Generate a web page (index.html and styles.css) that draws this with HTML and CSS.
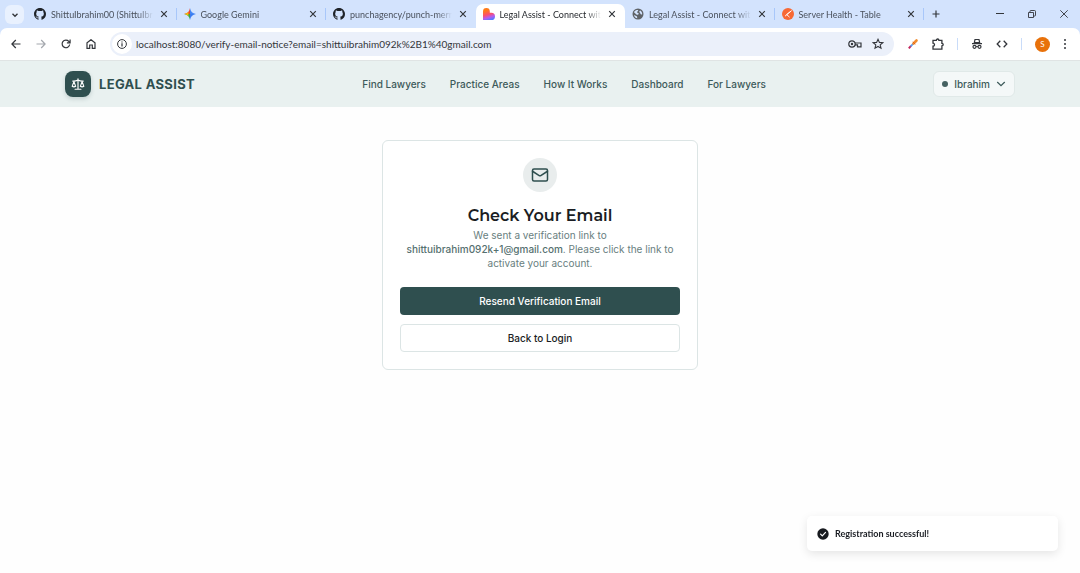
FILE: index.html
```html
<!DOCTYPE html>
<html lang="en">
<head>
    <meta charset="UTF-8">
    <meta name="viewport" content="width=device-width, initial-scale=1.0">
    <title>Legal Assist - Connect with</title>
    <link rel="stylesheet" href="styles.css">
</head>
<body>
    <!-- shared icons -->
    <svg class="sprite" aria-hidden="true">
        <symbol id="close" viewBox="0 0 8 8">
            <path d="M1.2 1.2l5.6 5.6M6.8 1.2L1.2 6.8" fill="none" stroke="currentColor" stroke-width="1.2"/>
        </symbol>
        <symbol id="github" viewBox="0 0 16 16">
            <path fill="#1f2328" d="M8 0C3.58 0 0 3.58 0 8c0 3.54 2.29 6.53 5.47 7.59.4.07.55-.17.55-.38 0-.19-.01-.82-.01-1.49-2.01.37-2.53-.49-2.69-.94-.09-.23-.48-.94-.82-1.13-.28-.15-.68-.52-.01-.53.63-.01 1.08.58 1.23.82.72 1.21 1.87.87 2.33.66.07-.52.28-.87.51-1.07-1.78-.2-3.64-.89-3.64-3.95 0-.87.31-1.59.82-2.15-.08-.2-.36-1.02.08-2.12 0 0 .67-.21 2.2.82.64-.18 1.32-.27 2-.27s1.36.09 2 .27c1.53-1.04 2.2-.82 2.2-.82.44 1.1.16 1.92.08 2.12.51.56.82 1.27.82 2.15 0 3.07-1.87 3.75-3.65 3.95.29.25.54.73.54 1.48 0 1.07-.01 1.93-.01 2.2 0 .21.15.46.55.38A8.01 8.01 0 0 0 16 8c0-4.42-3.58-8-8-8z"/>
        </symbol>
    </svg>

    <div class="browser">
        <div class="tab-strip">
            <button class="tab-search" aria-label="Search tabs">
                <svg width="8" height="8" viewBox="0 0 8 8"><path d="M1.5 2.8L4 5.2l2.5-2.4" fill="none" stroke="currentColor" stroke-width="1.4"/></svg>
            </button>
            <div class="tabs">
                <div class="tab">
                    <svg class="favicon"><use href="#github"/></svg>
                    <span class="tab-title">ShittuIbrahim00 (ShittuIbra</span>
                    <button class="tab-close" aria-label="Close tab"><svg><use href="#close"/></svg></button>
                </div>
                <div class="tab">
                    <svg class="favicon" viewBox="0 0 12 12">
                        <path d="M6 0C6.500 3.500 8.500 5.500 12 6H6z" fill="#4285f4"/>
                        <path d="M6 0C5.500 3.500 3.500 5.500 0 6h6z" fill="#ea4335"/>
                        <path d="M0 6c3.500.5 5.500 2.500 6 6V6z" fill="#34a853"/>
                        <path d="M12 6C8.500 6.500 6.500 8.500 6 12V6z" fill="#3b7cf0"/>
                        <path d="M0 6c2-.3 3.400-1 4.400-2.200v4.400C3.400 7 2 6.300 0 6z" fill="#fbbc04"/>
                    </svg>
                    <span class="tab-title">Google Gemini</span>
                    <button class="tab-close" aria-label="Close tab"><svg><use href="#close"/></svg></button>
                </div>
                <div class="tab before-active">
                    <svg class="favicon"><use href="#github"/></svg>
                    <span class="tab-title">punchagency/punch-mern</span>
                    <button class="tab-close" aria-label="Close tab"><svg><use href="#close"/></svg></button>
                </div>
                <div class="tab active">
                    <svg class="favicon" viewBox="0 0 12 12">
                        <defs>
                            <linearGradient id="heart" x1="0.2" y1="0" x2="0.5" y2="1">
                                <stop offset="0.2" stop-color="#ff7a18"/>
                                <stop offset="0.55" stop-color="#fb4f6b"/>
                                <stop offset="0.8" stop-color="#b45cf0"/>
                                <stop offset="1" stop-color="#5b7bff"/>
                            </linearGradient>
                        </defs>
                        <path d="M0 12V3.500a3.400 3.400 0 0 1 6.800 0v1.300h1.600a3.600 3.600 0 0 1 0 7.200z" fill="url(#heart)"/>
                    </svg>
                    <span class="tab-title">Legal Assist - Connect with</span>
                    <button class="tab-close" aria-label="Close tab"><svg><use href="#close"/></svg></button>
                </div>
                <div class="tab">
                    <svg class="favicon" viewBox="0 0 12 12">
                        <circle cx="6" cy="6" r="5.500" fill="#5f6368"/>
                        <path d="M2 4.200C3 2.400 4.500 2 6 2.100c.6.900-.2 1.400-1 1.600-.3.800.4 1 1.300 1.300.8.500.3 1.600-.7 1.700-.9 0-1.500-.7-2.300-1.300zM8.200 2.600c1.300.8 2 2 2 3.600-.8.500-1.700.2-1.900-.7-.1-.8-1-.9-1-1.700 0-.6.500-.9.900-1.200zM2 7.200c1.200 0 2 .7 2.700 1.100.6.400.3 1.200.6 1.900C3.600 10 2.300 8.800 2 7.200z" fill="#d3e3fd"/>
                    </svg>
                    <span class="tab-title">Legal Assist - Connect with</span>
                    <button class="tab-close" aria-label="Close tab"><svg><use href="#close"/></svg></button>
                </div>
                <div class="tab">
                    <svg class="favicon" viewBox="0 0 12 12">
                        <circle cx="6" cy="6" r="6" fill="#f76935"/>
                        <path d="M9.600 2.600L4.600 6.500l3 2.700M9.200 3L3 8.200" fill="none" stroke="#fff" stroke-width="0.9"/>
                    </svg>
                    <span class="tab-title">Server Health - Table</span>
                    <button class="tab-close" aria-label="Close tab"><svg><use href="#close"/></svg></button>
                </div>
            </div>
            <div class="window-side">
                <button class="new-tab" aria-label="New tab">
                    <svg width="8" height="8" viewBox="0 0 8 8"><path d="M4 .5v7M.5 4h7" stroke="currentColor" stroke-width="1.200"/></svg>
                </button>
                <div class="window-controls">
                    <button aria-label="Minimize"><svg width="8" height="8" viewBox="0 0 8 8"><path d="M0 3.500h8" stroke="currentColor"/></svg></button>
                    <button aria-label="Restore"><svg width="8" height="8" viewBox="0 0 8 8"><path d="M.5 2.500h5v5h-5zM2 2.500V1.200Q2 .5 2.700.5H6.500Q7.500.5 7.500 1.500V5.300Q7.500 6 6.800 6H5.500" fill="none" stroke="currentColor" stroke-width="0.9"/></svg></button>
                    <button aria-label="Close"><svg width="8" height="8" viewBox="0 0 8 8"><path d="M.3.3l7.400 7.400M7.700.3L.3 7.700" stroke="currentColor" stroke-width="0.9"/></svg></button>
                </div>
            </div>
        </div>

        <div class="toolbar">
            <div class="nav-buttons">
                <button aria-label="Back"><svg width="10" height="10" viewBox="0 0 10 10"><path d="M9.500 5H1M4.800 1L.9 5l3.900 4" fill="none" stroke="currentColor" stroke-width="1.200"/></svg></button>
                <button class="muted" aria-label="Forward"><svg width="10" height="10" viewBox="0 0 10 10"><path d="M.5 5H9M5.200 1l3.900 4-3.900 4" fill="none" stroke="currentColor" stroke-width="1.200"/></svg></button>
                <button aria-label="Reload"><svg width="10" height="10" viewBox="0 0 10 10"><path d="M8.700 5.500a3.800 3.800 0 1 1-.9-3.100L9 3.600M9.100.6v3.200H5.900" fill="none" stroke="currentColor" stroke-width="1.200"/></svg></button>
                <button aria-label="Home"><svg width="10" height="10" viewBox="0 0 10 10"><path d="M1 9.400V3.900l4-3.200 4 3.200v5.500H6.300V6H3.700v3.400z" fill="none" stroke="currentColor" stroke-width="1.200"/></svg></button>
            </div>
            <div class="address-bar">
                <button class="site-info" aria-label="Site information"><svg width="10" height="10" viewBox="0 0 10 10"><circle cx="5" cy="5" r="4.400" fill="none" stroke="currentColor"/><path d="M5 4.300v3.200M5 2.400v1.200" stroke="currentColor" stroke-width="1.200"/></svg></button>
                <input class="url" type="text" aria-label="Address" value="localhost:8080/verify-email-notice?email=shittuibrahim092k%2B1%40gmail.com">
                <button aria-label="Passwords"><svg width="14" height="10" viewBox="0 0 14 10"><circle cx="4" cy="5" r="3.200" fill="none" stroke="currentColor" stroke-width="1.200"/><circle cx="4" cy="5" r="1.200" fill="currentColor"/><path d="M7 4h6v3.800H9.500V5.800H7" fill="none" stroke="currentColor" stroke-width="1.200"/></svg></button>
                <button aria-label="Bookmark"><svg width="12" height="12" viewBox="0 0 12 12"><path d="M6 1.300l1.400 3.100 3.400.3-2.600 2.200.8 3.300-3-1.700-3 1.700.8-3.300L1.200 4.700l3.400-.3z" fill="none" stroke="currentColor" stroke-width="1.100"/></svg></button>
            </div>
            <div class="extensions">
                <button aria-label="Color picker"><svg width="12" height="12" viewBox="0 0 12 12"><path d="M1.800 10.300L4 7.800" stroke="#c2255c" stroke-width="2"/><path d="M3.600 8.300L7 4.900" stroke="#5c9ded" stroke-width="1.800"/><path d="M6.500 5.500l3-3" stroke="#f08c2e" stroke-width="2.600" stroke-linecap="round"/><path d="M5.800 3.800l2.500 2.500" stroke="#e8590c" stroke-width="0.8"/></svg></button>
                <button aria-label="Extensions"><svg width="12" height="12" viewBox="0 0 12 12"><path d="M1 2.300h3.300a1.300 1.300 0 0 1 2.600 0h3v3a1.300 1.300 0 0 1 0 2.600v3.300H1V8.200a1.500 1.500 0 0 0 0-3z" fill="none" stroke="currentColor" stroke-width="1.300"/></svg></button>
                <span class="divider"></span>
                <button aria-label="Incognito"><svg width="12" height="12" viewBox="0 0 12 12"><path d="M3.300 4.700L4 1.500h4l.7 3.200zM1 5.700h10" fill="none" stroke="currentColor" stroke-width="1.200"/><circle cx="3.500" cy="8.800" r="1.500" fill="none" stroke="currentColor" stroke-width="1.200"/><circle cx="8.500" cy="8.800" r="1.500" fill="none" stroke="currentColor" stroke-width="1.200"/><path d="M5 8.600h2" stroke="currentColor"/></svg></button>
                <button aria-label="Developer tools"><svg width="12" height="12" viewBox="0 0 12 12"><path d="M4.300 2.800L1.200 6l3.100 3.200M7.700 2.800L10.800 6 7.700 9.200" fill="none" stroke="currentColor" stroke-width="1.300"/></svg></button>
                <span class="divider"></span>
                <button class="profile" aria-label="Profile">S</button>
                <button class="more" aria-label="Menu"><svg width="4" height="12" viewBox="0 0 4 12"><g fill="currentColor"><circle cx="2" cy="2" r="1"/><circle cx="2" cy="6" r="1"/><circle cx="2" cy="10" r="1"/></g></svg></button>
            </div>
        </div>
    </div>

    <header class="site-header">
        <div class="container">
            <a class="brand" href="#">
                <span class="brand-mark">
                    <svg width="14" height="14" viewBox="0 0 24 24" fill="none" stroke="currentColor" stroke-width="2" stroke-linecap="round" stroke-linejoin="round"><path d="m16 16 3-8 3 8c-.87.65-1.920 1-3 1s-2.130-.35-3-1Z"/><path d="m2 16 3-8 3 8c-.87.65-1.920 1-3 1s-2.130-.35-3-1Z"/><path d="M7 21h10M12 3v18M3 7h2c2 0 5-1 7-2 2 1 5 2 7 2h2"/></svg>
                </span>
                <span class="brand-name">LEGAL ASSIST</span>
            </a>
            <nav class="site-nav">
                <a href="#">Find Lawyers</a>
                <a href="#">Practice Areas</a>
                <a href="#">How It Works</a>
                <a href="#">Dashboard</a>
                <a href="#">For Lawyers</a>
            </nav>
            <button class="user-menu">
                <span class="status-dot"></span>
                Ibrahim
                <svg width="10" height="10" viewBox="0 0 10 10"><path d="M1.500 3.300L5 6.700l3.500-3.400" fill="none" stroke="currentColor" stroke-width="1.200" stroke-linecap="round"/></svg>
            </button>
        </div>
    </header>

    <main>
        <section class="card">
            <div class="card-icon">
                <svg width="18" height="18" viewBox="0 0 24 24" fill="none" stroke="currentColor" stroke-width="2" stroke-linecap="round" stroke-linejoin="round"><rect x="2" y="4" width="20" height="16" rx="2"/><path d="m22 7-8.970 5.700a1.940 1.940 0 0 1-2.060 0L2 7"/></svg>
            </div>
            <h1>Check Your Email</h1>
            <p>We sent a verification link to <strong>shittuibrahim092k+1@gmail.com</strong>. Please click the link to activate your account.</p>
            <div class="actions">
                <button class="btn btn-primary">Resend Verification Email</button>
                <button class="btn btn-outline">Back to Login</button>
            </div>
        </section>
    </main>

    <div class="toast" role="status">
        <svg width="12" height="12" viewBox="0 0 12 12"><circle cx="6" cy="6" r="5.700" fill="#171a1f"/><path d="M3.600 6.200l1.700 1.700 3.200-3.500" fill="none" stroke="#fff" stroke-width="1.200" stroke-linecap="round" stroke-linejoin="round"/></svg>
        <span>Registration successful!</span>
    </div>
</body>
</html>
```
FILE: styles.css
```css
* {
    margin: 0;
    padding: 0;
    box-sizing: border-box;
}

body {
    font-family: Inter, "Liberation Sans", sans-serif;
    font-size: 10px;
    background: #fefefe;
    color: #1a1d23;
}

a {
    color: inherit;
    text-decoration: none;
}

button {
    font: inherit;
    color: inherit;
    background: none;
    border: none;
    cursor: pointer;
}

svg {
    display: block;
    flex-shrink: 0;
}

.sprite {
    position: absolute;
    width: 0;
    height: 0;
}

/* browser window */
.browser {
    font-family: "Segoe UI", Lato, "Noto Sans", sans-serif;
    color: #33363b;
    background: #d3e3fd;
}

.browser button {
    display: flex;
    align-items: center;
    justify-content: center;
}

.tab-strip {
    display: flex;
    height: 28px;
    padding-left: 5px;
}

.tab-search {
    width: 19px;
    height: 19px;
    margin: 5px 3px 0 0;
    border-radius: 6px;
    background: #e9f1fe;
}

.tabs {
    display: flex;
    flex: 1;
    min-width: 0;
}

.tab {
    position: relative;
    display: flex;
    flex: 1 1 0;
    align-items: center;
    gap: 5px;
    min-width: 0;
    height: 20px;
    margin-top: 4px;
    padding: 0 7px;
    font-size: 9px;
    color: #4a515c;
}

.tab::after {
    content: "";
    position: absolute;
    right: 0;
    top: 4px;
    width: 1px;
    height: 12px;
    background: #a8c7fa;
}

.tab.before-active::after,
.tab.active::after {
    display: none;
}

.tab.active {
    height: 24px;
    padding-bottom: 4px;
    background: #fff;
    border-radius: 7px 7px 0 0;
    color: #26292e;
}

.favicon {
    width: 12px;
    height: 12px;
}

.tab-title {
    flex: 1;
    min-width: 0;
    white-space: nowrap;
    -webkit-mask-image: linear-gradient(to right, #000 85%, transparent);
    mask-image: linear-gradient(to right, #000 85%, transparent);
}

.tab-close {
    width: 12px;
    height: 12px;
    color: #33363b;
}

.tab-close svg {
    width: 8px;
    height: 8px;
}

.window-side {
    display: flex;
    justify-content: space-between;
    width: 156px;
}

.new-tab {
    width: 24px;
}

.window-controls {
    display: flex;
}

.window-controls button {
    width: 32px;
}

.toolbar {
    display: flex;
    align-items: center;
    height: 32px;
    padding: 0 13px 0 3px;
    background: #fff;
    border-radius: 7px 7px 0 0;
}

.nav-buttons {
    display: flex;
}

.nav-buttons button {
    width: 25px;
    height: 24px;
}

.nav-buttons .muted {
    color: #a3a7ad;
}

.address-bar {
    display: flex;
    flex: 1;
    align-items: center;
    gap: 10px;
    height: 24px;
    margin-left: 7px;
    padding: 0 10px 0 2px;
    border-radius: 12px;
    background: #ebf0fa;
}

.address-bar .site-info {
    width: 20px;
    height: 20px;
    margin-right: -6px;
    border-radius: 50%;
    background: #fff;
}

.url {
    flex: 1;
    min-width: 0;
    border: none;
    outline: none;
    background: none;
    font-family: inherit;
    font-size: 10px;
    color: #33363b;
}

.extensions {
    display: flex;
    align-items: center;
    gap: 13px;
    padding-left: 13px;
}

.divider {
    width: 1px;
    height: 12px;
    background: #c9dcf9;
}

.profile {
    width: 15px;
    height: 15px;
    border-radius: 50%;
    font-size: 8px;
}

.browser .profile {
    background: #e8710a;
    color: #fff;
}

/* site header */
.site-header {
    background: #e9f1f0;
    border-top: 1px solid #e0e4e4;
}

.container {
    display: flex;
    align-items: center;
    justify-content: space-between;
    max-width: 982px;
    height: 46px;
    margin: 0 auto;
    padding: 0 16px;
}

.brand {
    display: flex;
    align-items: center;
    gap: 8px;
    color: #2f4f4f;
}

.brand-mark {
    display: flex;
    align-items: center;
    justify-content: center;
    width: 26px;
    height: 26px;
    border-radius: 8px;
    background: #2f4f4f;
    color: #fff;
    box-shadow: 0 2px 4px rgba(47, 79, 79, 0.2);
}

.brand-name {
    font-size: 13px;
    font-weight: 700;
    letter-spacing: 0.025em;
}

.site-nav {
    display: flex;
    gap: 24px;
    font-weight: 500;
    color: #3d5a5a;
}

.user-menu {
    display: flex;
    align-items: center;
    gap: 6px;
    height: 26px;
    padding: 0 8px;
    border: 1px solid #e0e9e8;
    border-radius: 6px;
    background: #f4f8f8;
    font-weight: 500;
    color: #3d5a5a;
}

.status-dot {
    width: 6px;
    height: 6px;
    border-radius: 50%;
    background: #456161;
}

/* verification card */
main {
    padding: 33px 16px;
}

.card {
    max-width: 316px;
    margin: 0 auto;
    padding: 17px;
    border: 1px solid #dce5e5;
    border-radius: 6px;
    background: #fff;
    text-align: center;
}

.card-icon {
    display: flex;
    align-items: center;
    justify-content: center;
    width: 34px;
    height: 34px;
    margin: 0 auto 12px;
    border-radius: 50%;
    background: #e9eded;
    color: #2f4f4f;
}

.card h1 {
    font-family: Montserrat, Inter, sans-serif;
    font-size: 16px;
    font-weight: 600;
    line-height: 24px;
}

.card p {
    line-height: 14px;
    color: #698080;
}

.card strong {
    font-weight: 500;
    color: #557070;
}

.actions {
    display: flex;
    flex-direction: column;
    gap: 9px;
    margin-top: 17px;
}

.btn {
    height: 28px;
    border-radius: 4px;
    font-weight: 500;
}

.btn-primary {
    background: #2f4f4f;
    color: #fff;
}

.btn-outline {
    border: 1px solid #dce5e5;
    background: #fff;
}

/* toast */
.toast {
    position: fixed;
    right: 22px;
    bottom: 22px;
    display: flex;
    align-items: center;
    gap: 6px;
    width: 251px;
    height: 35px;
    padding: 0 10px;
    border-radius: 5px;
    background: #fff;
    box-shadow: 0 3px 10px rgba(0, 0, 0, 0.1);
    font-family: "Segoe UI", Lato, "Noto Sans", sans-serif;
    font-size: 9px;
    font-weight: 700;
}
```
